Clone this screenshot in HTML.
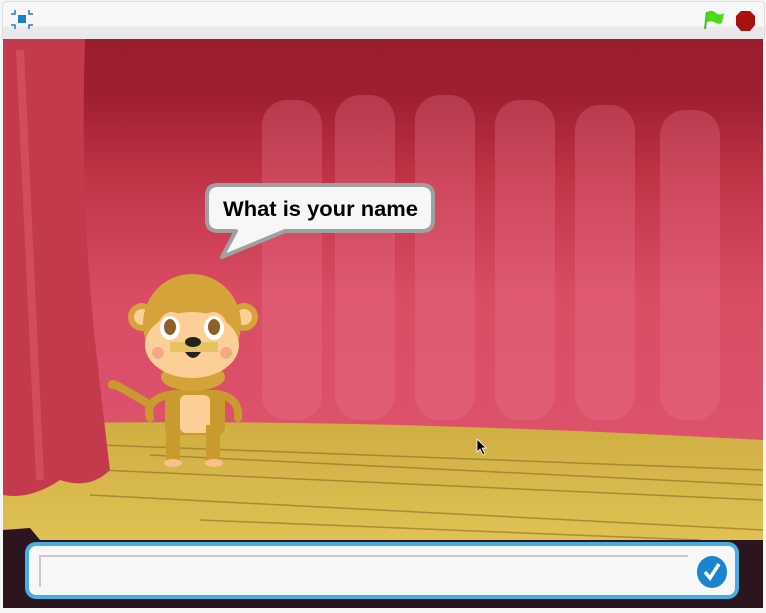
<!DOCTYPE html>
<html><head><style>
body{margin:0;width:766px;height:613px;background:#f5f5f5;position:relative;overflow:hidden;font-family:"Liberation Sans",sans-serif}
.top{position:absolute;left:2px;top:1px;width:761px;height:38px;border:1px solid #ddd;border-bottom:none;border-radius:5px 5px 0 0;background:linear-gradient(#f7f7f7 0,#f7f7f7 24px,#e8e9e8 25px,#e8e9e8 38px)}
</style></head><body>
<div class="top"></div>
<svg style="position:absolute;left:0;top:0" width="766" height="613">
<g fill="#1a7fc6"><rect x="18" y="15" width="8" height="8"/></g>
<g stroke="#1a7fc6" stroke-width="1.5" fill="none"><path d="M11 14h4v-4M33 14h-4v-4M11 25h4v4M33 25h-4v4"/></g>
<path d="M707 12 L705 29" stroke="#3bbd1a" stroke-width="2"/>
<path d="M707 12 Q712 9 716 13 Q720 16 724 13 L722 23 Q718 25 714 22 Q710 20 706 23Z" fill="#4cdc17"/>
<polygon points="741,11 750,11 755,16 755,25 750,31 741,31 736,25 736,16" fill="#a8110c"/>
<defs>
<linearGradient id="cur" x1="0" y1="0" x2="0" y2="1"><stop offset="0" stop-color="#9b1e2e"/><stop offset="0.1" stop-color="#9e1f30"/><stop offset="0.25" stop-color="#c23448"/><stop offset="0.45" stop-color="#d94c64"/><stop offset="1" stop-color="#e15b74"/></linearGradient>
<linearGradient id="fl" x1="0" y1="0" x2="0" y2="1"><stop offset="0" stop-color="#cfae42"/><stop offset="1" stop-color="#e0c255"/></linearGradient>
</defs>
<rect x="3" y="39" width="760" height="569" fill="url(#cur)"/>
<g fill="#ea7790" opacity="0.3">
<rect x="262" y="100" width="60" height="320" rx="25"/><rect x="335" y="95" width="60" height="325" rx="25"/><rect x="415" y="95" width="60" height="325" rx="25"/><rect x="495" y="100" width="60" height="320" rx="25"/><rect x="575" y="105" width="60" height="315" rx="25"/><rect x="660" y="110" width="60" height="310" rx="25"/>
</g>
<path d="M3 425 Q300 415 763 440 L763 545 L3 545Z" fill="url(#fl)"/>
<g stroke="#8a6a20" stroke-width="1.5" opacity="0.6">
<path d="M100 445 L763 470M100 470 L763 500M90 495 L763 530M150 455 L763 485M200 520 L700 540"/>
</g>
<path d="M3 530 L30 528 L40 540 L763 540 L763 608 L3 608Z" fill="#2d1520"/>
<path d="M3 39 L85 39 Q80 200 95 340 Q105 430 110 470 Q90 490 60 480 Q30 500 3 495Z" fill="#c23a4c"/>
<path d="M20 50 Q30 250 40 480" stroke="#e06070" stroke-width="8" fill="none" opacity="0.5"/>
<path d="M218 185 H422 Q433 185 433 196 V220 Q433 231 422 231 H285 L222 257 L236 231 H218 Q207 231 207 220 V196 Q207 185 218 185Z" fill="#f7f7f7" stroke="#a0a0a0" stroke-width="4" stroke-linejoin="round"/>
<text x="223" y="216" font-size="21" font-weight="bold" fill="#000" textLength="195" lengthAdjust="spacingAndGlyphs">What is your name</text>
<path d="M150 405 Q110 380 112 385" stroke="#c89a30" stroke-width="8" fill="none" stroke-linecap="round"/>
<circle cx="142" cy="317" r="14" fill="#d4a33a"/><circle cx="142" cy="317" r="8" fill="#fbcf96"/>
<circle cx="244" cy="317" r="14" fill="#d4a33a"/><circle cx="244" cy="317" r="8" fill="#fbcf96"/>
<rect x="165" y="390" width="60" height="45" rx="8" fill="#c99a2e"/>
<rect x="180" y="395" width="30" height="38" rx="6" fill="#fbcf96"/>
<rect x="166" y="425" width="14" height="38" fill="#c99a2e"/><rect x="206" y="425" width="14" height="38" fill="#c99a2e"/>
<ellipse cx="173" cy="463" rx="9" ry="4" fill="#fbc08a"/><ellipse cx="214" cy="463" rx="9" ry="4" fill="#fbc08a"/>
<path d="M168 395 Q145 400 150 418" stroke="#c99a2e" stroke-width="8" fill="none" stroke-linecap="round"/>
<path d="M222 395 Q240 400 238 418" stroke="#c99a2e" stroke-width="8" fill="none" stroke-linecap="round"/>
<ellipse cx="193" cy="377" rx="32" ry="14" fill="#d4a33a"/>
<ellipse cx="192" cy="324" rx="49" ry="50" fill="#d4a33a"/>
<ellipse cx="192" cy="345" rx="47" ry="33" fill="#fbcf96"/>
<ellipse cx="172" cy="328" rx="14" ry="16" fill="#fbcf96"/><ellipse cx="213" cy="328" rx="14" ry="16" fill="#fbcf96"/>
<ellipse cx="170" cy="328" rx="10" ry="12" fill="#fff"/><ellipse cx="214" cy="328" rx="10" ry="12" fill="#fff"/>
<ellipse cx="170" cy="327" rx="6" ry="8" fill="#8b5e2a"/><ellipse cx="214" cy="327" rx="6" ry="8" fill="#8b5e2a"/>
<rect x="170" y="342" width="48" height="10" fill="#e6c362"/>
<ellipse cx="193" cy="342" rx="8" ry="5" fill="#222"/>
<path d="M185 352 Q193 364 201 352Z" fill="#222"/>
<circle cx="158" cy="353" r="6" fill="#f5a888"/><circle cx="226" cy="353" r="6" fill="#f5a888"/>
<path d="M477 439 V452 L480 449 L483 455 L485 454 L482 448 L486 448Z" fill="#000" stroke="#fff" stroke-width="0.8"/>
<rect x="27" y="544" width="710" height="53" rx="9" fill="#f7f7f7" stroke="#48ade0" stroke-width="4"/>
<path d="M40 587 V556 H688" stroke="#c8c8c8" stroke-width="2" fill="none"/>
<ellipse cx="712" cy="572" rx="15" ry="16" fill="#1a84d0"/>
<path d="M705 572 L710 578 L719 564" stroke="#fff" stroke-width="3.5" fill="none"/>
</svg>
</body></html>
